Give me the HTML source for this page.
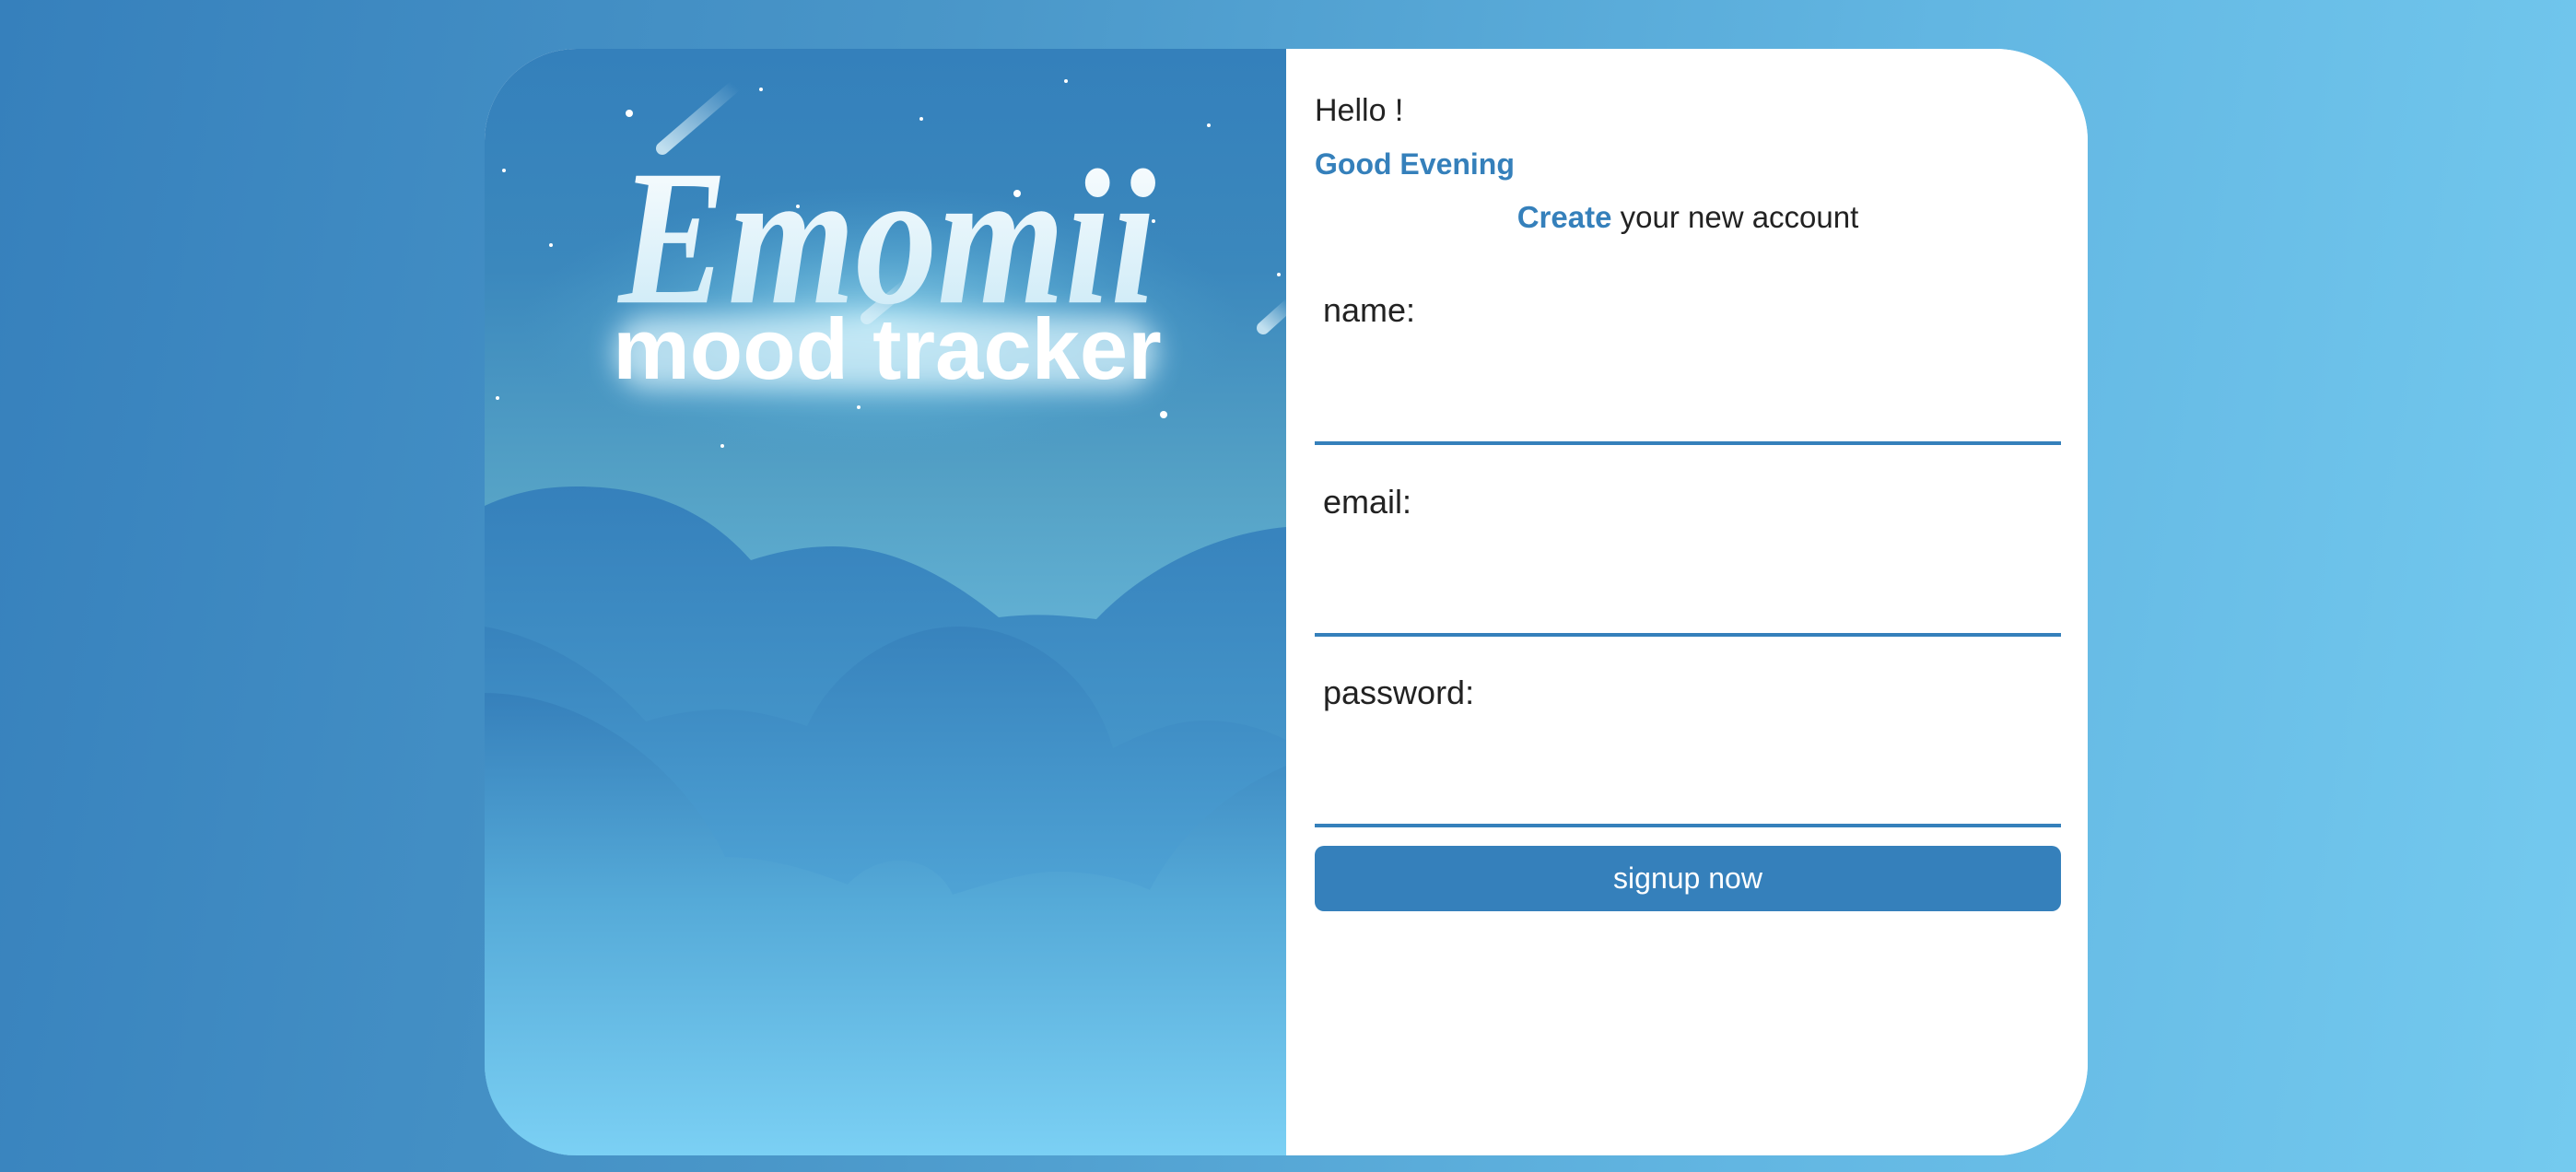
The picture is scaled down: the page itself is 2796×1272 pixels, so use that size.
<!DOCTYPE html>
<html><head><meta charset="utf-8">
<style>
html,body{margin:0;padding:0;}
body{width:2796px;height:1272px;overflow:hidden;position:relative;
background:linear-gradient(100deg,#3680bc 0%,#4a97c9 35%,#62b6e2 70%,#74caef 100%);
font-family:"Liberation Sans",sans-serif;}
.card{position:absolute;left:526px;top:53px;width:1740px;height:1201px;border-radius:100px;overflow:hidden;background:#fff;}
.left{position:absolute;left:0;top:0;width:870px;height:1201px;}
.right{position:absolute;left:870px;top:0;width:870px;height:1201px;background:#fff;}
.t{position:absolute;white-space:nowrap;}
.line{position:absolute;left:31px;width:810px;height:4px;background:#3580bb;}
.btn{position:absolute;left:31px;top:865px;width:810px;height:71px;background:#3580bb;border-radius:10px;color:#fff;text-align:center;font-size:32px;line-height:71px;font-weight:300;}
</style></head><body>
<div class="card">
<div class="left">
<svg width="870" height="1201" viewBox="0 0 870 1201" xmlns="http://www.w3.org/2000/svg">
<defs>
<linearGradient id="sky" x1="0" y1="0" x2="0" y2="1">
<stop offset="0" stop-color="#3480bb"/><stop offset="0.2" stop-color="#3b88bd"/><stop offset="0.4" stop-color="#55a2c6"/><stop offset="0.55" stop-color="#64b3d6"/><stop offset="1" stop-color="#7bd0f4"/>
</linearGradient>
<linearGradient id="c1" gradientUnits="userSpaceOnUse" x1="0" y1="470" x2="0" y2="900">
<stop offset="0" stop-color="#3580bb"/><stop offset="1" stop-color="#4c9fd0"/></linearGradient>
<linearGradient id="c2" gradientUnits="userSpaceOnUse" x1="0" y1="620" x2="0" y2="1000">
<stop offset="0" stop-color="#3782bc"/><stop offset="1" stop-color="#55acdc"/></linearGradient>
<linearGradient id="c3" gradientUnits="userSpaceOnUse" x1="0" y1="700" x2="0" y2="1201">
<stop offset="0" stop-color="#3680bb"/><stop offset="0.45" stop-color="#55aad8"/><stop offset="1" stop-color="#7bd0f4"/></linearGradient>
<radialGradient id="glow" cx="0.5" cy="0.5" r="0.5">
<stop offset="0" stop-color="#9fdcef" stop-opacity="0.9"/><stop offset="0.5" stop-color="#6fc0e0" stop-opacity="0.45"/><stop offset="1" stop-color="#4fa3cc" stop-opacity="0"/></radialGradient>
<linearGradient id="txt" x1="0" y1="0" x2="0" y2="1">
<stop offset="0" stop-color="#ffffff"/><stop offset="1" stop-color="#c7e8f6"/></linearGradient>
<linearGradient id="met" x1="0" y1="1" x2="1" y2="0">
<stop offset="0" stop-color="#cfe9f5" stop-opacity="0.9"/><stop offset="1" stop-color="#cfe9f5" stop-opacity="0"/></linearGradient>
<filter id="blur" x="-20%" y="-50%" width="140%" height="200%"><feGaussianBlur stdDeviation="14"/></filter>
</defs>
<rect width="870" height="1201" fill="url(#sky)"/>
<ellipse cx="430" cy="300" rx="390" ry="150" fill="url(#glow)"/>
<g fill="#fff">
<circle cx="157" cy="70" r="4"/><circle cx="300" cy="44" r="2"/><circle cx="631" cy="35" r="2"/><circle cx="474" cy="76" r="2"/><circle cx="786" cy="83" r="2"/><circle cx="21" cy="132" r="2"/><circle cx="72" cy="213" r="2"/><circle cx="340" cy="171" r="2"/><circle cx="578" cy="157" r="4"/><circle cx="726" cy="187" r="2"/><circle cx="862" cy="245" r="2"/><circle cx="14" cy="379" r="2"/><circle cx="406" cy="389" r="2"/><circle cx="737" cy="397" r="4"/><circle cx="258" cy="431" r="2"/>
</g>
<g stroke="url(#met)" stroke-width="14" stroke-linecap="round">
<line x1="193" y1="108" x2="272" y2="40"/><line x1="845" y1="303" x2="875" y2="276"/><line x1="415" y1="292" x2="461" y2="254"/>
</g>
<rect x="140" y="290" width="590" height="80" rx="40" fill="#d8f2fb" opacity="0.75" filter="url(#blur)"/>
<text x="437" y="318" text-anchor="middle" font-family="Liberation Serif,serif" font-style="italic" font-weight="bold" font-size="178" fill="url(#txt)" transform="translate(0,-100) scale(1,1.18)">Emomii</text>
<text x="437" y="358" text-anchor="middle" font-family="Liberation Sans,sans-serif" font-weight="bold" font-size="94" fill="#fff">mood tracker</text>
<path d="M0 496 C40 478 70 475 105 475 C180 476 240 500 289 555 C320 545 350 540 378 540 C440 540 500 570 558 617 C600 612 630 615 664 619 C720 560 800 525 870 519 L870 1201 L0 1201 Z" fill="url(#c1)"/>
<path d="M0 627 C70 640 130 680 175 730 C200 722 230 717 258 717 C290 717 320 725 350 735 C380 670 450 627 514 627 C590 627 660 680 682 759 C720 740 750 729 783 729 C820 729 850 740 870 750 L870 1201 L0 1201 Z" fill="url(#c2)"/>
<path d="M0 699 C120 700 220 790 261 877 C310 878 350 890 394 907 C410 890 430 881 450 881 C480 881 500 900 508 918 C550 905 590 893 622 893 C660 893 700 902 722 913 C760 840 820 800 870 778 L870 1201 L0 1201 Z" fill="url(#c3)"/>
</svg>
</div>
<div class="right">
<div class="t" style="left:31px;top:50px;font-size:34px;line-height:34px;color:#222;">Hello !</div>
<div class="t" style="left:31px;top:108px;font-size:32px;line-height:34px;color:#3580bb;font-weight:bold;">Good Evening</div>
<div class="t" style="left:0;width:872px;text-align:center;top:166px;font-size:33px;line-height:34px;color:#222;"><b style="color:#3580bb">Create</b> your new account</div>
<div class="t" style="left:40px;top:266px;font-size:36px;line-height:36px;color:#222;">name:</div>
<div class="line" style="top:426px"></div>
<div class="t" style="left:40px;top:474px;font-size:36px;line-height:36px;color:#222;">email:</div>
<div class="line" style="top:634px"></div>
<div class="t" style="left:40px;top:681px;font-size:36px;line-height:36px;color:#222;">password:</div>
<div class="line" style="top:841px"></div>
<div class="btn">signup now</div>
</div>
</div>
</body></html>
